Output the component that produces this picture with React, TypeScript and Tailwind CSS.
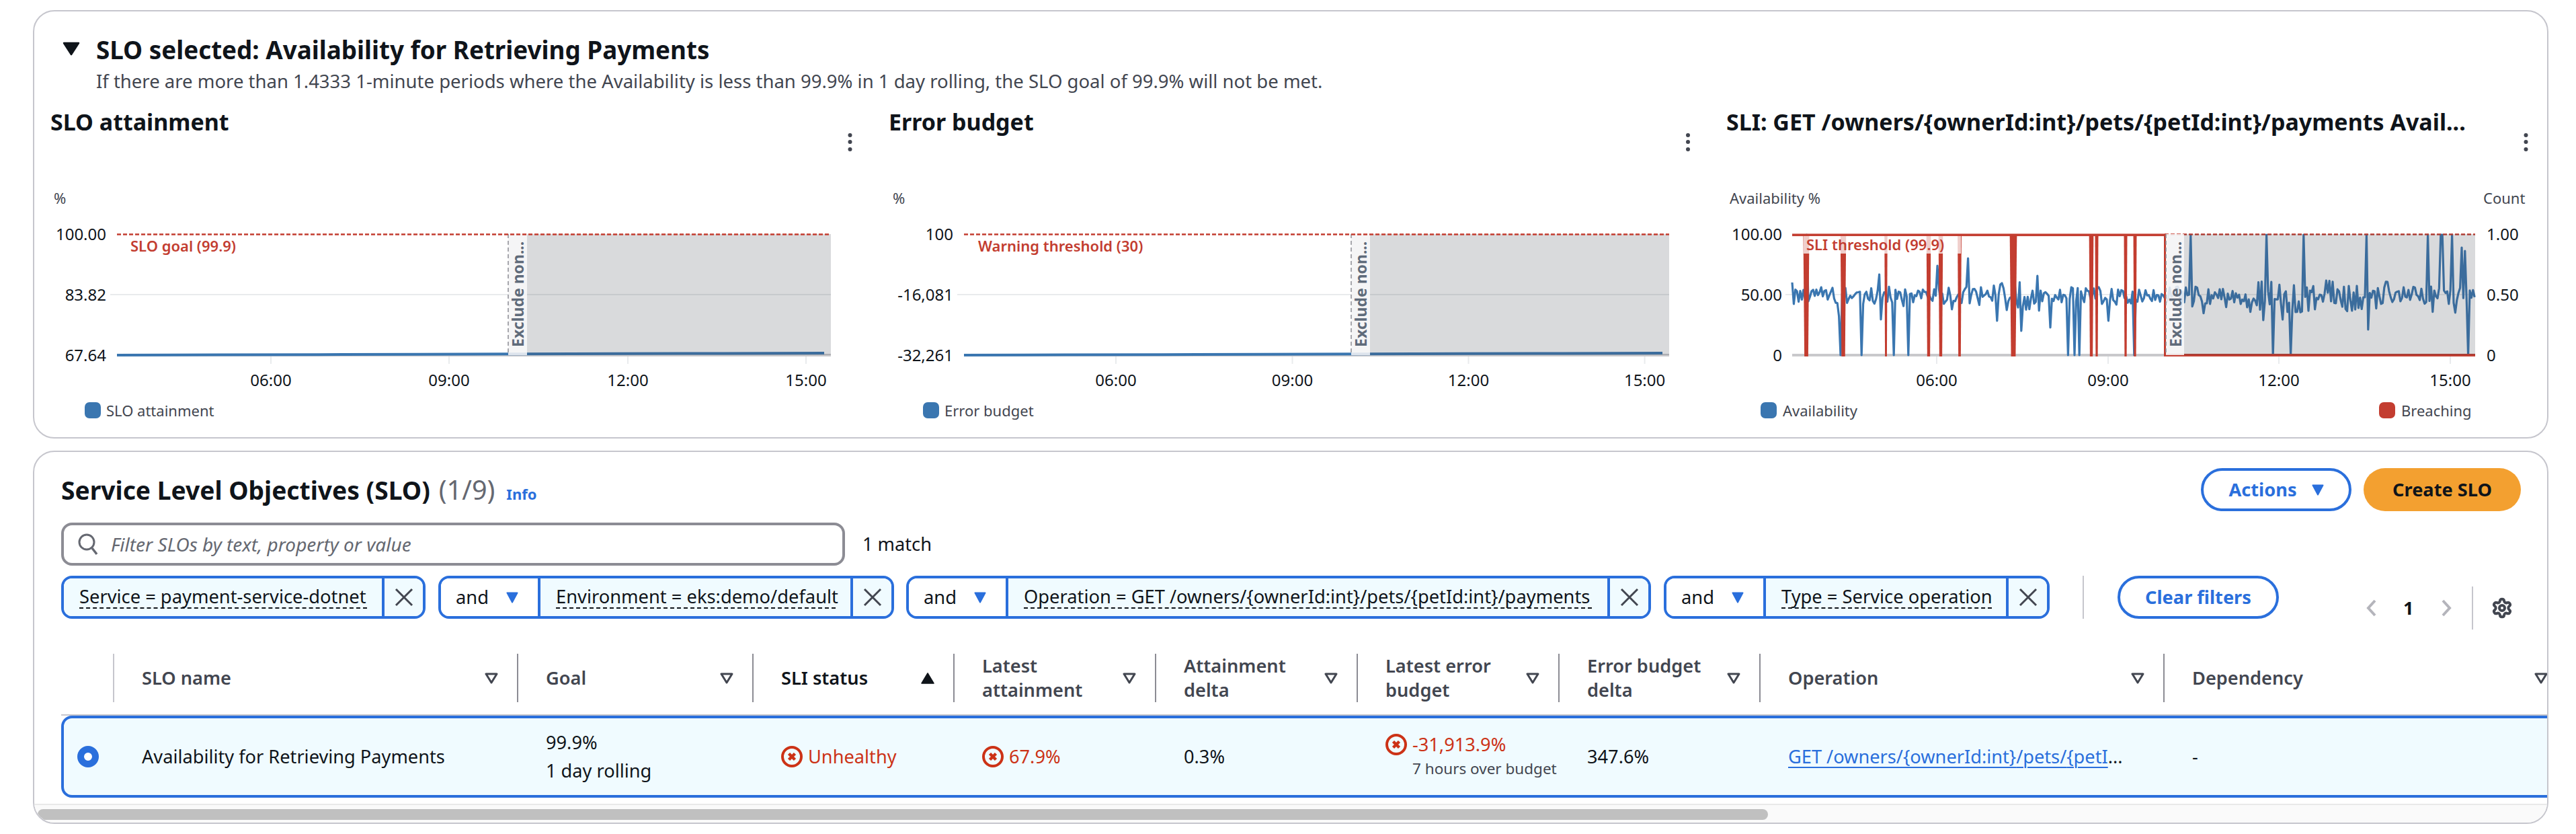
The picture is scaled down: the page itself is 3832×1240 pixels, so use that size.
import React from "react";
import { Settings } from "lucide-react";

const RED = "#c33d30";
const BLUE = "#3a76b0";

function rng(seed: number) {
  let a = seed;
  return () => {
    a |= 0;
    a = (a + 0x6d2b79f5) | 0;
    let t = Math.imul(a ^ (a >>> 15), 1 | a);
    t = (t + Math.imul(t ^ (t >>> 7), 61 | t)) ^ t;
    return ((t ^ (t >>> 14)) >>> 0) / 4294967296;
  };
}

const OVERRIDES: [number, number][] = [
  [2667, 420], [2669, 452], [2687, 349], [2737, 528], [2735, 470], [2769, 528], [2795, 408], [2797, 475], [2817, 528], [2838, 528],
  [2881, 395], [2927, 384], [2971, 477], [3006, 492], [3031, 410], [3050, 487], [3077, 528], [3085, 528], [3093, 528], [3137, 477],
  [3174, 528], [3260, 349], [3372, 349], [3366, 476], [3381, 528], [3407, 528], [3427, 349], [3520, 349], [3522, 490], [3612, 349],
  [3630, 349], [3633, 349], [3647, 349], [3661, 368], [3666, 373], [3672, 528],
];

function availabilityPath() {
  const r = rng(42);
  const pts: string[] = [];
  for (let x = 2666; x <= 3682; x += 2.4) {
    let amp = 13;
    if (x > 2940 && x < 3040) amp = 22;
    if (x > 3335 && x < 3560) amp = 24;
    let y = 437 + (r() - 0.42) * amp * 2;
    if (r() > 0.93) y += 14;
    const o = OVERRIDES.find(([ox]) => Math.abs(ox - x) <= 1.2);
    if (o) y = o[1];
    pts.push(`${x.toFixed(1)} ${y.toFixed(1)}`);
  }
  return "M" + pts.join("L");
}

const DIPS: [number, number][] = [
  [2687, 9], [2742, 8.5], [2805.5, 4.5], [2869, 6.7], [2887, 6.7], [2915, 5.8], [2995, 10.7], [3111, 6.7], [3119, 5], [3162, 5], [3176, 5],
];

function BreachingShape() {
  return (
    <g fill={RED}>
      <rect x={2666} y={347.5} width={556} height={3.6} />
      {DIPS.map(([x, w]) => (
        <polygon key={x} points={`${x - w / 2},348 ${x + w / 2},348 ${x + w * 0.32},530 ${x - w * 0.32},530`} />
      ))}
      <rect x={3219} y={348} width={3.2} height={182} />
      <rect x={3219} y={526} width={463} height={4} />
    </g>
  );
}

function Band({ x1, x2, right }: { x1: number; x2: number; right: number }) {
  return (
    <g>
      <rect x={x1} y={348} width={x2 - x1} height={180} fill="#f4f4f5" fillOpacity={0.88} />
      <rect x={x2} y={348} width={right - x2} height={180} fill="#424650" fillOpacity={0.2} />
      <line x1={x1} y1={348} x2={x1} y2={528} stroke="#8c8c94" strokeWidth={1.5} strokeDasharray="6 4" />
      <text transform={`translate(${x1 + 23} 516) rotate(-90)`} fontSize={23} fontWeight={700} fill="#5f6b7a">
        Exclude non...
      </text>
    </g>
  );
}

function Axis({ x0, x1, labelRight, ticks, labels }: { x0: number; x1: number; labelRight: number; ticks: number[]; labels: string[] }) {
  const times = ["06:00", "09:00", "12:00", "15:00"];
  return (
    <g>
      {labels.map((l, i) => (
        <text key={l} x={labelRight} y={[357, 447, 537][i]} textAnchor="end" fontSize={24} fill="#0f141a">
          {l}
        </text>
      ))}
      <line x1={x0 - 10} x2={x1} y1={438} y2={438} stroke="#e9ebed" strokeWidth={2} />
      {ticks.map((t, i) => (
        <g key={t}>
          <line x1={t} x2={t} y1={528} y2={541} stroke="#e9ebed" strokeWidth={2} />
          <text x={t} y={574} textAnchor="middle" fontSize={24} fill="#0f141a">
            {times[i]}
          </text>
        </g>
      ))}
    </g>
  );
}

function Dots({ x }: { x: number }) {
  return (
    <g fill="#424650">
      <circle cx={x} cy={201} r={3} />
      <circle cx={x} cy={211} r={3} />
      <circle cx={x} cy={222} r={3} />
    </g>
  );
}

function Legend({ x, tx, label, color = BLUE }: { x: number; tx: number; label: string; color?: string }) {
  return (
    <g>
      <rect x={x} y={598} width={24} height={24} rx={7} fill={color} />
      <text x={tx} y={619} fontSize={22} fill="#424650">
        {label}
      </text>
    </g>
  );
}

function SimpleChart(p: {
  col: number;
  x0: number;
  x1: number;
  labelRight: number;
  unitX: number;
  ticks: number[];
  labels: string[];
  ex1: number;
  ex2: number;
  dots: number;
  legX: number;
  legTx: number;
  legend: string;
  note: string;
  noteX: number;
}) {
  const w = p.x1 - 10 - p.x0;
  const steps = 7;
  let line = `M${p.x0} 528`;
  for (let i = 1; i <= steps; i++) {
    const a = p.x0 + (w * i) / steps;
    line += `L${a} ${(528 - (i * 3) / steps).toFixed(2)}`;
  }
  return (
    <svg viewBox={`${p.col} 201 1247 439`} className="w-[1247px] h-[439px] block overflow-visible">
      <Dots x={p.dots} />
      <text x={p.unitX} y={303} fontSize={22} fill="#424650">
        %
      </text>
      <Axis x0={p.x0} x1={p.x1} labelRight={p.labelRight} ticks={p.ticks} labels={p.labels} />
      <line x1={p.x0} x2={p.x1} y1={528} y2={528} stroke="#c9c9cc" strokeWidth={4} />
      <path d={line} stroke={BLUE} strokeWidth={4} fill="none" />
      <Band x1={p.ex1} x2={p.ex2} right={p.x1} />
      <line x1={p.x0} x2={p.x1} y1={348.5} y2={348.5} stroke={RED} strokeWidth={2.5} strokeDasharray="6 3" />
      <text x={p.noteX} y={374} fontSize={22} fontWeight={600} fill={RED}>
        {p.note}
      </text>
      <Legend x={p.legX} tx={p.legTx} label={p.legend} />
    </svg>
  );
}

function SliChart() {
  return (
    <svg viewBox="2568 201 1221 439" className="w-[1221px] h-[439px] block overflow-visible">
      <Dots x={3757.5} />
      <text x={2573} y={303} fontSize={22} fill="#424650">
        Availability %
      </text>
      <text x={3694} y={303} fontSize={22} fill="#424650">
        Count
      </text>
      <Axis x0={2666} x1={3682} labelRight={2651} ticks={[2881, 3136, 3390, 3645]} labels={["100.00", "50.00", "0"]} />
      {["1.00", "0.50", "0"].map((l, i) => (
        <text key={l} x={3699} y={[357, 447, 537][i]} fontSize={24} fill="#0f141a">
          {l}
        </text>
      ))}
      <line x1={2666} x2={3682} y1={528} y2={528} stroke="#c9c9cc" strokeWidth={4} />
      <path d={availabilityPath()} stroke={BLUE} strokeWidth={3.2} fill="none" strokeLinejoin="round" />
      <BreachingShape />
      <line x1={3220} x2={3682} y1={348.5} y2={348.5} stroke={RED} strokeWidth={2.5} strokeDasharray="6 3" />
      <Band x1={3222} x2={3249} right={3682} />
      <rect x={2683} y={351} width={234} height={26} fill="#ffffff" fillOpacity={0.75} />
      <text x={2687} y={372} fontSize={22} fontWeight={600} fill={RED}>
        SLI threshold (99.9)
      </text>
      <Legend x={2619} tx={2652} label="Availability" />
      <Legend x={3539} tx={3572} label="Breaching" color={RED} />
    </svg>
  );
}

function ChartColumn({ title, children }: { title: string; children: React.ReactNode }) {
  return (
    <div>
      <h3 className="h-[40px] text-[34px] leading-[40px] font-bold text-[#0f141a] whitespace-nowrap">{title}</h3>
      {children}
    </div>
  );
}

function CaretDown({ color = "#2a6fdc" }: { color?: string }) {
  return (
    <svg width="18" height="17" viewBox="0 0 18 17" className="shrink-0">
      <path d="M1.5 1.5h15L9 15.5z" fill={color} stroke={color} strokeWidth="2" strokeLinejoin="round" />
    </svg>
  );
}

function SortIcon({ active }: { active?: boolean }) {
  return active ? (
    <svg width="20" height="17" viewBox="0 0 20 17">
      <path d="M10 1l9 15H1z" fill="#0f141a" stroke="#0f141a" strokeWidth="1.5" strokeLinejoin="round" />
    </svg>
  ) : (
    <svg width="20" height="17" viewBox="0 0 20 17">
      <path d="M2 2h16l-8 13z" fill="none" stroke="#424650" strokeWidth="3" strokeLinejoin="round" />
    </svg>
  );
}

function CloseIcon() {
  return (
    <svg width="28" height="28" viewBox="0 0 28 28">
      <path d="M2 2l24 24M26 2L2 26" stroke="#424650" strokeWidth="3" fill="none" />
    </svg>
  );
}

function ErrorIcon() {
  return (
    <svg width="32" height="32" viewBox="0 0 32 32" className="shrink-0">
      <circle cx="16" cy="16" r="14" fill="none" stroke="#cc3216" strokeWidth="4" />
      <path d="M11.5 11.5l9 9M20.5 11.5l-9 9" stroke="#cc3216" strokeWidth="4.5" fill="none" />
    </svg>
  );
}

function Token({ w, and, label, andW = 148, textW }: { w: number; and?: boolean; label: string; andW?: number; textW: number }) {
  return (
    <div
      className="h-[64px] shrink-0 flex border-[4px] border-[#2a6fdc] rounded-[16px] overflow-hidden text-[27.3px] text-[#0f141a]"
      style={{ width: w }}
    >
      {and && (
        <div className="shrink-0 flex items-center gap-[26px] pl-[22px] bg-white border-r-[4px] border-[#2a6fdc]" style={{ width: andW }}>
          <span>and</span>
          <CaretDown />
        </div>
      )}
      <div className="flex-1 bg-[#f0fbff] flex items-center pl-[23px]">
        <span className="border-b-2 border-dashed border-[#0f141a] leading-[32px] whitespace-nowrap block" style={{ width: textW }}>
          {label}
        </span>
      </div>
      <div className="w-[61px] shrink-0 bg-[#f0fbff] border-l-[4px] border-[#2a6fdc] flex items-center justify-center">
        <CloseIcon />
      </div>
    </div>
  );
}

const COLS = "grid-cols-[77px_601px_350px_299px_300px_300px_300px_299px_601px_600px]";
const ROWCOLS = "grid-cols-[73px_601px_350px_299px_300px_300px_300px_299px_601px_600px]";

function Head({ children, active, first }: { children: React.ReactNode; active?: boolean; first?: boolean }) {
  return (
    <div
      className={`h-[72px] border-l-2 ${first ? "border-[#c6c6cd]" : "border-[#8c8c94]"} pl-[41px] pr-[28px] flex items-center justify-between text-[27.2px] leading-[36px] font-semibold ${
        active ? "text-[#0f141a]" : "text-[#424650]"
      }`}
    >
      <div className="whitespace-pre-line">{children}</div>
      <SortIcon active={active} />
    </div>
  );
}

export default function App() {
  return (
    <div className="w-[3832px] h-[1240px] bg-white pt-[15px] pl-[49px] pr-[41px] font-['Noto_Sans',sans-serif] text-[#0f141a] overflow-hidden">
      <section className="h-[637px] border-2 border-[#c6c6cd] rounded-[32px] pt-[33px] pl-[24px]">
        <div className="pl-[68px] relative">
          <svg className="absolute left-[18px] top-[12px]" width="26" height="21" viewBox="0 0 26 21">
            <path d="M2 2h22L13 19z" fill="#0f141a" stroke="#0f141a" strokeWidth="2.5" strokeLinejoin="round" />
          </svg>
          <h2 className="text-[36.8px] leading-[48px] font-bold">SLO selected: Availability for Retrieving Payments</h2>
          <p className="mt-[5px] text-[27.5px] leading-[36px] text-[#424650]">
            If there are more than 1.4333 1-minute periods where the Availability is less than 99.9% in 1 day rolling, the SLO goal of 99.9% will not be met.
          </p>
        </div>
        <div className="mt-[22px] grid grid-cols-[1247px_1246px_1221px]">
          <ChartColumn title="SLO attainment">
            <SimpleChart
              col={75}
              x0={174}
              x1={1236}
              labelRight={158}
              unitX={80}
              ticks={[403, 668, 934, 1199]}
              labels={["100.00", "83.82", "67.64"]}
              ex1={756}
              ex2={784}
              dots={1264.5}
              legX={126}
              legTx={158}
              legend="SLO attainment"
              note="SLO goal (99.9)"
              noteX={194}
            />
          </ChartColumn>
          <ChartColumn title="Error budget">
            <SimpleChart
              col={1322}
              x0={1434}
              x1={2483}
              labelRight={1418}
              unitX={1328}
              ticks={[1660, 1922.5, 2184.5, 2446.6]}
              labels={["100", "-16,081", "-32,261"]}
              ex1={2010}
              ex2={2038}
              dots={2511}
              legX={1373}
              legTx={1405}
              legend="Error budget"
              note="Warning threshold (30)"
              noteX={1455}
            />
          </ChartColumn>
          <ChartColumn title="SLI: GET /owners/{ownerId:int}/pets/{petId:int}/payments Avail...">
            <SliChart />
          </ChartColumn>
        </div>
      </section>

      <section className="mt-[18px] h-[555px] border-2 border-[#c6c6cd] rounded-[32px] overflow-hidden pt-[24px]">
        <div className="pl-[40px] pr-[39px]">
          <div className="h-[64px] flex items-center justify-between">
            <div className="flex items-baseline">
              <h2 className="text-[37.2px] leading-[48px] font-bold">Service Level Objectives (SLO)</h2>
              <span className="ml-[13px] text-[39.5px] leading-[48px] text-[#656871]">(1/9)</span>
              <span className="ml-[17px] text-[22px] font-bold text-[#2a6fdc]">Info</span>
            </div>
            <div className="flex gap-[18px]">
              <button className="w-[224px] h-[64px] border-[4px] border-[#2a6fdc] rounded-full bg-white flex items-center justify-center gap-[22px] text-[27.2px] font-bold text-[#2a6fdc]">
                Actions
                <CaretDown />
              </button>
              <button className="w-[234px] h-[64px] rounded-full bg-[#f3a030] text-[27.2px] font-bold text-[#0f141a]">Create SLO</button>
            </div>
          </div>

          <div className="mt-[17px] flex items-center">
            <div className="w-[1166px] h-[64px] border-[4px] border-[#8c8c94] rounded-[16px] flex items-center pl-[20px] gap-[18px]">
              <svg width="32" height="34" viewBox="0 0 32 34" fill="none" stroke="#656871" strokeWidth="3">
                <circle cx="14" cy="14" r="11" />
                <path d="M22 23l7 9" strokeWidth="3.5" />
              </svg>
              <span className="text-[28px] italic text-[#656871]">Filter SLOs by text, property or value</span>
            </div>
            <span className="ml-[26px] text-[27.2px]">1 match</span>
          </div>

          <div className="mt-[15px] h-[80px] flex items-start">
            <Token w={542} label="Service = payment-service-dotnet" textW={428} />
            <div className="ml-[19px]">
              <Token w={678} and label="Environment = eks:demo/default" textW={416} />
            </div>
            <div className="ml-[18px]">
              <Token w={1108} and label="Operation = GET /owners/{ownerId:int}/pets/{petId:int}/payments" textW={845} />
            </div>
            <div className="ml-[19px]">
              <Token w={574} and label="Type = Service operation" textW={313} />
            </div>
            <div className="ml-[49px] w-[2px] h-[64px] bg-[#c6c6cd]" />
            <button className="ml-[50px] w-[240px] h-[64px] border-[4px] border-[#2a6fdc] rounded-full bg-white text-[27.2px] font-bold text-[#2a6fdc]">
              Clear filters
            </button>
            <div className="ml-[129px] self-end h-[64px] flex items-center">
              <svg width="16" height="28" viewBox="0 0 16 28" fill="none" stroke="#b4b4bb" strokeWidth="4">
                <path d="M14 3L4 14l10 11" />
              </svg>
              <span className="ml-[40px] w-[16px] text-[27.2px] font-bold">1</span>
              <svg className="ml-[41px]" width="16" height="28" viewBox="0 0 16 28" fill="none" stroke="#b4b4bb" strokeWidth="4">
                <path d="M2 3l10 11L2 25" />
              </svg>
              <div className="ml-[29px] w-[2px] h-[64px] bg-[#c6c6cd]" />
              <Settings className="ml-[27px]" size={32} color="#424650" strokeWidth={3} />
            </div>
          </div>
        </div>

        <div className="mt-[36px] ml-[40px] overflow-hidden">
          <div className={`grid ${COLS} w-[3727px] h-[92px] border-b-2 border-[#c6c6cd]`}>
            <div />
            <Head first>SLO name</Head>
            <Head>Goal</Head>
            <Head active>SLI status</Head>
            <Head>{"Latest\nattainment"}</Head>
            <Head>{"Attainment\ndelta"}</Head>
            <Head>{"Latest error\nbudget"}</Head>
            <Head>{"Error budget\ndelta"}</Head>
            <Head>Operation</Head>
            <Head>Dependency</Head>
          </div>
          <div className={`grid ${ROWCOLS} w-[3727px] h-[122px] items-center border-[4px] border-[#2a6fdc] rounded-l-[16px] bg-[#f0fbff] text-[27.2px] leading-[42px]`}>
            <div className="pl-[20px]">
              <span className="block w-[32px] h-[32px] rounded-full border-[10px] border-[#2a6fdc] bg-white" />
            </div>
            <div className="pl-[43px]">Availability for Retrieving Payments</div>
            <div className="pl-[43px]">
              99.9%
              <br />1 day rolling
            </div>
            <div className="pl-[43px] flex items-center gap-[8px] text-[#cc3216]">
              <ErrorIcon />
              Unhealthy
            </div>
            <div className="pl-[43px] flex items-center gap-[8px] text-[#cc3216]">
              <ErrorIcon />
              67.9%
            </div>
            <div className="pl-[43px]">0.3%</div>
            <div className="pl-[43px] leading-[36px] whitespace-nowrap">
              <div className="flex items-center gap-[8px] text-[#cc3216]">
                <ErrorIcon />
                -31,913.9%
              </div>
              <div className="pl-[40px] text-[22.5px] text-[#424650]">7 hours over budget</div>
            </div>
            <div className="pl-[43px]">347.6%</div>
            <div className="pl-[43px] whitespace-nowrap">
              <span className="text-[#2a6fdc] underline underline-offset-[5px] decoration-2">GET /owners/{"{ownerId:int}"}/pets/{"{petI"}</span>
              ...
            </div>
            <div className="pl-[43px]">-</div>
          </div>
        </div>

        <div className="mt-[9px] h-[28px] bg-[#fafafa] border-t-2 border-[#e9e9e9] pt-[6px] pl-[5px]">
          <div className="w-[2574px] h-[16px] rounded-[8px] bg-[#c0c0c0]" />
        </div>
      </section>
    </div>
  );
}
